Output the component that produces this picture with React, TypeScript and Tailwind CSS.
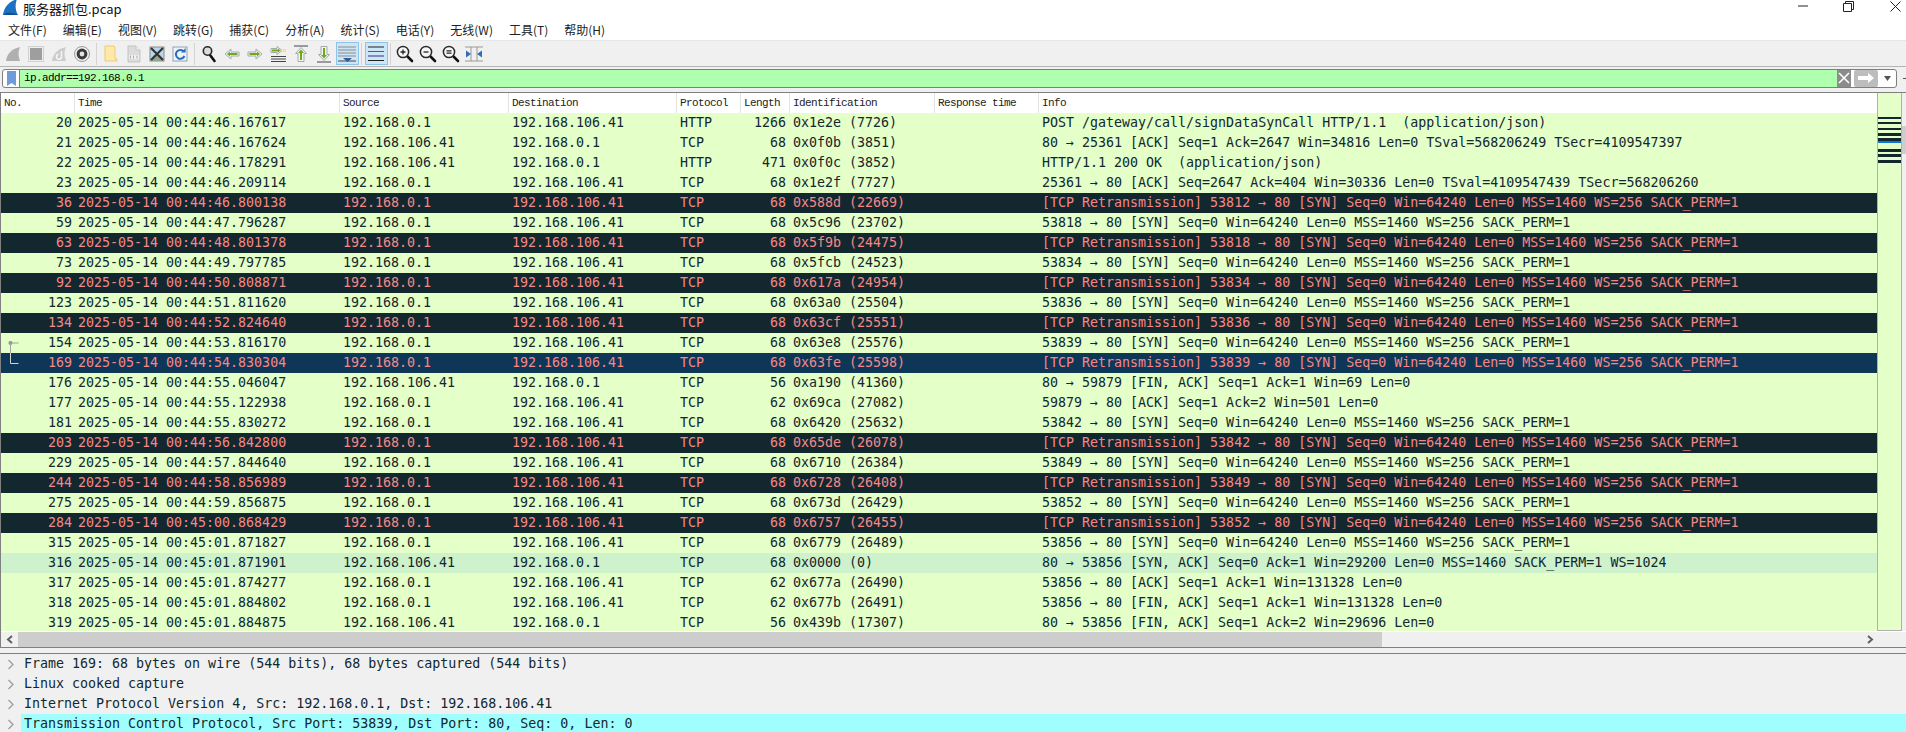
import React from "react";

type Kind = "n" | "d" | "s" | "a";
type Row = [number, string, string, string, string, number, string, string, Kind];

const S = "192.168.0.1";
const D = "192.168.106.41";
const rows: Row[] = [
  [20, "2025-05-14 00:44:46.167617", S, D, "HTTP", 1266, "0x1e2e (7726)", "POST /gateway/call/signDataSynCall HTTP/1.1  (application/json)", "n"],
  [21, "2025-05-14 00:44:46.167624", D, S, "TCP", 68, "0x0f0b (3851)", "80 → 25361 [ACK] Seq=1 Ack=2647 Win=34816 Len=0 TSval=568206249 TSecr=4109547397", "n"],
  [22, "2025-05-14 00:44:46.178291", D, S, "HTTP", 471, "0x0f0c (3852)", "HTTP/1.1 200 OK  (application/json)", "n"],
  [23, "2025-05-14 00:44:46.209114", S, D, "TCP", 68, "0x1e2f (7727)", "25361 → 80 [ACK] Seq=2647 Ack=404 Win=30336 Len=0 TSval=4109547439 TSecr=568206260", "n"],
  [36, "2025-05-14 00:44:46.800138", S, D, "TCP", 68, "0x588d (22669)", "[TCP Retransmission] 53812 → 80 [SYN] Seq=0 Win=64240 Len=0 MSS=1460 WS=256 SACK_PERM=1", "d"],
  [59, "2025-05-14 00:44:47.796287", S, D, "TCP", 68, "0x5c96 (23702)", "53818 → 80 [SYN] Seq=0 Win=64240 Len=0 MSS=1460 WS=256 SACK_PERM=1", "n"],
  [63, "2025-05-14 00:44:48.801378", S, D, "TCP", 68, "0x5f9b (24475)", "[TCP Retransmission] 53818 → 80 [SYN] Seq=0 Win=64240 Len=0 MSS=1460 WS=256 SACK_PERM=1", "d"],
  [73, "2025-05-14 00:44:49.797785", S, D, "TCP", 68, "0x5fcb (24523)", "53834 → 80 [SYN] Seq=0 Win=64240 Len=0 MSS=1460 WS=256 SACK_PERM=1", "n"],
  [92, "2025-05-14 00:44:50.808871", S, D, "TCP", 68, "0x617a (24954)", "[TCP Retransmission] 53834 → 80 [SYN] Seq=0 Win=64240 Len=0 MSS=1460 WS=256 SACK_PERM=1", "d"],
  [123, "2025-05-14 00:44:51.811620", S, D, "TCP", 68, "0x63a0 (25504)", "53836 → 80 [SYN] Seq=0 Win=64240 Len=0 MSS=1460 WS=256 SACK_PERM=1", "n"],
  [134, "2025-05-14 00:44:52.824640", S, D, "TCP", 68, "0x63cf (25551)", "[TCP Retransmission] 53836 → 80 [SYN] Seq=0 Win=64240 Len=0 MSS=1460 WS=256 SACK_PERM=1", "d"],
  [154, "2025-05-14 00:44:53.816170", S, D, "TCP", 68, "0x63e8 (25576)", "53839 → 80 [SYN] Seq=0 Win=64240 Len=0 MSS=1460 WS=256 SACK_PERM=1", "n"],
  [169, "2025-05-14 00:44:54.830304", S, D, "TCP", 68, "0x63fe (25598)", "[TCP Retransmission] 53839 → 80 [SYN] Seq=0 Win=64240 Len=0 MSS=1460 WS=256 SACK_PERM=1", "s"],
  [176, "2025-05-14 00:44:55.046047", D, S, "TCP", 56, "0xa190 (41360)", "80 → 59879 [FIN, ACK] Seq=1 Ack=1 Win=69 Len=0", "n"],
  [177, "2025-05-14 00:44:55.122938", S, D, "TCP", 62, "0x69ca (27082)", "59879 → 80 [ACK] Seq=1 Ack=2 Win=501 Len=0", "n"],
  [181, "2025-05-14 00:44:55.830272", S, D, "TCP", 68, "0x6420 (25632)", "53842 → 80 [SYN] Seq=0 Win=64240 Len=0 MSS=1460 WS=256 SACK_PERM=1", "n"],
  [203, "2025-05-14 00:44:56.842800", S, D, "TCP", 68, "0x65de (26078)", "[TCP Retransmission] 53842 → 80 [SYN] Seq=0 Win=64240 Len=0 MSS=1460 WS=256 SACK_PERM=1", "d"],
  [229, "2025-05-14 00:44:57.844640", S, D, "TCP", 68, "0x6710 (26384)", "53849 → 80 [SYN] Seq=0 Win=64240 Len=0 MSS=1460 WS=256 SACK_PERM=1", "n"],
  [244, "2025-05-14 00:44:58.856989", S, D, "TCP", 68, "0x6728 (26408)", "[TCP Retransmission] 53849 → 80 [SYN] Seq=0 Win=64240 Len=0 MSS=1460 WS=256 SACK_PERM=1", "d"],
  [275, "2025-05-14 00:44:59.856875", S, D, "TCP", 68, "0x673d (26429)", "53852 → 80 [SYN] Seq=0 Win=64240 Len=0 MSS=1460 WS=256 SACK_PERM=1", "n"],
  [284, "2025-05-14 00:45:00.868429", S, D, "TCP", 68, "0x6757 (26455)", "[TCP Retransmission] 53852 → 80 [SYN] Seq=0 Win=64240 Len=0 MSS=1460 WS=256 SACK_PERM=1", "d"],
  [315, "2025-05-14 00:45:01.871827", S, D, "TCP", 68, "0x6779 (26489)", "53856 → 80 [SYN] Seq=0 Win=64240 Len=0 MSS=1460 WS=256 SACK_PERM=1", "n"],
  [316, "2025-05-14 00:45:01.871901", D, S, "TCP", 68, "0x0000 (0)", "80 → 53856 [SYN, ACK] Seq=0 Ack=1 Win=29200 Len=0 MSS=1460 SACK_PERM=1 WS=1024", "a"],
  [317, "2025-05-14 00:45:01.874277", S, D, "TCP", 62, "0x677a (26490)", "53856 → 80 [ACK] Seq=1 Ack=1 Win=131328 Len=0", "n"],
  [318, "2025-05-14 00:45:01.884802", S, D, "TCP", 62, "0x677b (26491)", "53856 → 80 [FIN, ACK] Seq=1 Ack=1 Win=131328 Len=0", "n"],
  [319, "2025-05-14 00:45:01.884875", D, S, "TCP", 56, "0x439b (17307)", "80 → 53856 [FIN, ACK] Seq=1 Ack=2 Win=29696 Len=0", "n"],
];

const menus = ["文件(F)", "编辑(E)", "视图(V)", "跳转(G)", "捕获(C)", "分析(A)", "统计(S)", "电话(Y)", "无线(W)", "工具(T)", "帮助(H)"];

const rowStyles: Record<Kind, string> = {
  n: "bg-[#e4ffc7] text-[#12272e]",
  d: "bg-[#12272e] text-[#f78787]",
  s: "bg-[#0e3757] text-[#f78787]",
  a: "bg-[#cdf2cc] text-[#12272e]",
};

function Ico({ children }: { children: React.ReactNode }) {
  return (
    <div className="w-[23px] h-[23px] flex items-center justify-center shrink-0">
      <svg width="20" height="20" viewBox="0 0 20 20" fill="none">{children}</svg>
    </div>
  );
}
function Sep({ w }: { w: string }) {
  return (
    <div className={`${w} h-[22px] flex justify-center shrink-0`}>
      <div className="w-px h-full bg-[#d4d4d4]" />
    </div>
  );
}
// Pale outlined arrow with a small green core, as in the reference's toolbar.
const Arrow = ({ outer, inner }: { outer: string; inner: string }) => (
  <>
    <path d={outer} fill="#f4f4f4" stroke="#a8a8a8" strokeWidth="1" strokeLinejoin="round" />
    <path d={inner} fill="#6aab1e" />
  </>
);
const Lens = ({ mark }: { mark?: React.ReactNode }) => (
  <>
    <path d="M12.5 12.5l4.5 4.5" stroke="#111" strokeWidth="2.6" strokeLinecap="round" />
    <circle cx="8" cy="8" r="5.6" fill="#f6f6f6" stroke="#2a2a2a" strokeWidth="1.5" />
    {mark}
  </>
);

function Toolbar() {
  return (
    <div className="h-[26px] bg-[#f0f0f0] border-b border-[#b4b4b4] flex items-center pl-[1.5px]">
      <Ico><path d="M3 17C4 10 8 5 17 3c-2 4-2 9 0 14z" fill="#b0b0b0" /></Ico>
      <Ico>
        <rect x="2.5" y="2.5" width="15" height="15" fill="#f0f0f0" stroke="#d0d0d0" />
        <rect x="4" y="4" width="12" height="12" fill="#9e9e9e" />
      </Ico>
      <Ico>
        <path d="M3 17C4 10 8 5 17 3c-2 4-2 9 0 14z" fill="#cccccc" />
        <path d="M12.5 7v5.5a2.5 2.5 0 1 1-3-2.2" stroke="#f4f4f4" strokeWidth="1.6" />
      </Ico>
      <Ico>
        <circle cx="10" cy="10" r="7.5" fill="#eeeeee" stroke="#9a9a9a" />
        <circle cx="10" cy="10" r="5.4" fill="#3a3a3a" />
        <circle cx="10" cy="10" r="2.4" fill="#e4e4e4" />
      </Ico>
      <Sep w="w-[6px]" />
      <Ico>
        <path d="M4 2h9l1 1v12h2v2H4z" fill="#ffe9a8" stroke="#eccb72" />
      </Ico>
      <Ico>
        <path d="M4 2h8l4 4v12H4z" fill="#dcdcdc" stroke="#c4c4c4" />
        <path d="M12 2v4h4" fill="#f4f4f4" stroke="#c4c4c4" />
        <rect x="5" y="11" width="10" height="4" fill="#f2f2f2" />
        <path d="M6.5 11.5v3M9.5 11.5v3M13 11.5v3" stroke="#a8a8a8" />
      </Ico>
      <Ico>
        <rect x="3" y="3" width="14" height="14" fill="#bcd6ee" stroke="#8a8a8a" />
        <path d="M3 17l4-6h6l4 6z" fill="#8fa88f" />
        <path d="M4 4l12 12M16 4L4 16" stroke="#333" strokeWidth="2.2" />
      </Ico>
      <Ico>
        <rect x="3" y="3" width="14" height="14" fill="#eef4fa" stroke="#8ea3b8" />
        <path d="M13.8 7.6A4.4 4.4 0 1 0 14.4 12" stroke="#2a6dbd" strokeWidth="2" />
        <path d="M11 8.4h4.6V4z" fill="#2a6dbd" />
      </Ico>
      <Sep w="w-[6px]" />
      <Ico>
        <path d="M11 11l4.5 6" stroke="#111" strokeWidth="2.6" strokeLinecap="round" />
        <circle cx="8.5" cy="7" r="4.2" fill="#dcdcdc" stroke="#2a2a2a" strokeWidth="1.6" />
      </Ico>
      <Ico><Arrow outer="M3 10l6-5v3h8v4H9v3z" inner="M5 10l3-2.6V9h7.5v2H8v1.6z" /></Ico>
      <Ico><Arrow outer="M17 10l-6-5v3H3v4h8v3z" inner="M15 10l-3-2.6V9H4.5v2H12v1.6z" /></Ico>
      <Ico>
        <path d="M3 12.5h15M3 15h15M3 17.5h15" stroke="#444" />
        <Arrow outer="M14 6.5L9 2.5v2H3v4h6v2z" inner="M12.4 6.5L10 4.6V5.6H4v2h6v1z" />
        <rect x="15" y="5" width="3" height="3" fill="#ffe17a" />
      </Ico>
      <Ico>
        <path d="M3 2h14" stroke="#444" />
        <Arrow outer="M10 3.5l5.5 6H13v8H7v-8H4.5z" inner="M10 5.5l3 3.5h-2v7H9V9H7z" />
      </Ico>
      <Ico>
        <path d="M3 18h14" stroke="#444" />
        <Arrow outer="M10 16.5l5.5-6H13v-8H7v8H4.5z" inner="M10 14.5l3-3.5h-2V4H9v7H7z" />
      </Ico>
      <div className="w-[23px] h-[23px] flex items-center justify-center shrink-0 bg-[#cde6f7] border border-[#8fc4ea]">
        <svg width="20" height="20" viewBox="0 0 20 20" fill="none">
          <path d="M1 3h18M1 6h18M1 9h18M1 12h18" stroke="#8a8a8a" />
          <path d="M1 17h18" stroke="#444" />
          <path d="M6 14h9l-4.5 4z" fill="#2a5d9c" />
        </svg>
      </div>
      <Sep w="w-[6px]" />
      <div className="w-[23px] h-[23px] flex items-center justify-center shrink-0 bg-[#cde6f7] border border-[#8fc4ea]">
        <svg width="20" height="20" viewBox="0 0 20 20" fill="none">
          <path d="M2 3h16" stroke="#222" />
          <path d="M2 7.5h16" stroke="#e02020" />
          <path d="M2 12h16" stroke="#3a2a8c" />
          <path d="M2 16.5h16" stroke="#222" />
        </svg>
      </div>
      <Sep w="w-[6px]" />
      <Ico><Lens mark={<path d="M5.5 8h5M8 5.5v5" stroke="#222" strokeWidth="1.3" />} /></Ico>
      <Ico><Lens mark={<path d="M5.5 8h5" stroke="#222" strokeWidth="1.3" />} /></Ico>
      <Ico><Lens mark={<path d="M5.5 6.8h5M5.5 9.2h5" stroke="#222" strokeWidth="1.2" />} /></Ico>
      <Ico>
        <path d="M1 3h18M1 17h18M7 3v14M13 3v14" stroke="#9a9a9a" />
        <path d="M2 6.5l5 3.5-5 3.500zM18 6.500l-5 3.500 5 3.500z" fill="#2e6fb5" />
      </Ico>
    </div>
  );
}

function FilterBar() {
  return (
    <div className="h-[25px] bg-[#f0f0f0] flex items-center pl-[2px]">
      <div className="flex-1 h-[19px] mt-[-3px] flex items-stretch rounded-[3px] border border-[#7f7f7f] bg-white overflow-hidden">
        <div className="w-[17px] flex justify-center items-center border-r border-[#7f7f7f] shrink-0">
          <svg width="9" height="15" viewBox="0 0 9 15">
            <path d="M0 0h9v15L4.500 12 0 15z" fill="#6f9bd8" />
          </svg>
        </div>
        <div className="flex-1 bg-[#afffaf] pl-[4px] text-[11px] tracking-[-0.6px] leading-[17px] text-black font-['Liberation_Mono',monospace]">ip.addr==192.168.0.1</div>
        <div className="w-[14px] bg-[#8c8c8c] flex items-center justify-center shrink-0">
          <svg width="12" height="12" viewBox="0 0 12 12"><path d="M1 1l10 10M11 1L1 11" stroke="#fff" strokeWidth="1.6" /></svg>
        </div>
        <div className="w-[3px] bg-white shrink-0" />
        <div className="w-[24px] bg-[#bdbdbd] rounded-[2px] flex items-center justify-center shrink-0">
          <svg width="16" height="10" viewBox="0 0 16 10"><path d="M0 3h10V0l6 5-6 5V7H0z" fill="#fff" /></svg>
        </div>
        <div className="w-[18px] flex items-center justify-center shrink-0">
          <svg width="7" height="5" viewBox="0 0 7 5"><path d="M0 0h7L3.500 5z" fill="#555" /></svg>
        </div>
      </div>
      <div className="w-[9px] flex justify-end shrink-0 mt-[-3px]">
        <div className="w-[3px] h-px bg-[#555]" />
      </div>
    </div>
  );
}

const hdr = "h-full pl-[3px] border-r border-[#e3e3e3] flex items-center shrink-0";

function PacketHeader() {
  return (
    <div className="h-[20px] shrink-0 flex bg-white text-[11px] tracking-[-0.6px] text-[#222] font-['Liberation_Mono',monospace] items-stretch">
      <div className={`${hdr} w-[74px]`}>No.</div>
      <div className={`${hdr} w-[265px]`}>Time</div>
      <div className={`${hdr} w-[169px]`}>Source</div>
      <div className={`${hdr} w-[168px]`}>Destination</div>
      <div className={`${hdr} w-[64px]`}>Protocol</div>
      <div className={`${hdr} w-[49px]`}>Length</div>
      <div className={`${hdr} w-[145px]`}>Identification</div>
      <div className={`${hdr} w-[104px]`}>Response time</div>
      <div className="pl-[3px] flex items-center flex-1">Info</div>
    </div>
  );
}

function PacketRow({ r }: { r: Row }) {
  const [no, time, src, dst, proto, len, id, info, kind] = r;
  return (
    <div className={`h-[20px] shrink-0 flex items-center relative whitespace-pre ${rowStyles[kind]}`}>
      {no === 154 && (
        <svg className="absolute left-0 top-0" width="20" height="20" viewBox="0 0 20 20" fill="none">
          <circle cx="9.500" cy="10" r="2" fill="#8f8f8f" />
          <path d="M9.500 10h8M9.500 10v10" stroke="#a0a0a0" />
        </svg>
      )}
      {no === 169 && (
        <svg className="absolute left-0 top-0" width="20" height="20" viewBox="0 0 20 20" fill="none">
          <path d="M9.500 0v10.500h8" stroke="#d4d4d4" />
        </svg>
      )}
      <div className="w-[71px] text-right shrink-0">{no}</div>
      <div className="w-[3px] shrink-0" />
      <div className="w-[265px] pl-[3px] shrink-0">{time}</div>
      <div className="w-[169px] pl-[3px] shrink-0">{src}</div>
      <div className="w-[168px] pl-[3px] shrink-0">{dst}</div>
      <div className="w-[64px] pl-[3px] shrink-0">{proto}</div>
      <div className="w-[45px] text-right shrink-0">{len}</div>
      <div className="w-[4px] shrink-0" />
      <div className="w-[145px] pl-[3px] shrink-0">{id}</div>
      <div className="w-[104px] shrink-0" />
      <div className="pl-[3px] flex-1">{info}</div>
    </div>
  );
}

function Minimap() {
  return (
    <div className="w-[25px] h-full shrink-0 bg-[#e4ffc7] border-x border-b border-[#b0b0b0] flex flex-col pt-[24px]">
      <div className="h-[2px] bg-[#12272e]" />
      <div className="h-[3px]" />
      <div className="h-[2px] bg-[#12272e]" />
      <div className="h-[4px]" />
      <div className="h-[2px] bg-[#12272e]" />
      <div className="h-[3px]" />
      <div className="h-[3px] bg-[#12272e]" />
      <div className="h-[2px]" />
      <div className="h-[3px] bg-[#12272e]" />
      <div className="h-[2px] bg-[#0a78d7]" />
      <div className="h-[6px]" />
      <div className="h-[3px] bg-[#12272e]" />
      <div className="h-[2px]" />
      <div className="h-[3px] bg-[#12272e]" />
      <div className="h-[3px]" />
      <div className="h-[3px] bg-[#12272e]" />
    </div>
  );
}

function PacketList() {
  return (
    <div className="h-[556px] shrink-0 border-t border-b border-l border-[#808080] flex flex-col bg-[#f0f0f0] overflow-hidden">
      <div className="flex-1 min-h-0 flex">
        <div className="flex-1 min-w-0 flex flex-col overflow-hidden bg-[#e4ffc7]">
          <PacketHeader />
          {rows.map((r) => (
            <PacketRow key={r[0]} r={r} />
          ))}
        </div>
        <Minimap />
        <div className="w-[4px] bg-[#f0f0f0] flex flex-col pt-[33px] shrink-0">
          <div className="h-[28px] bg-[#cdcdcd]" />
        </div>
      </div>
      <div className="h-[16px] shrink-0 flex items-center border-t border-white">
        <div className="w-[17px] flex justify-center shrink-0">
          <svg width="8" height="9" viewBox="0 0 8 9" fill="none"><path d="M6 1L2 4.500 6 8" stroke="#606060" strokeWidth="2" /></svg>
        </div>
        <div className="w-[1364px] h-full bg-[#cdcdcd] shrink-0" />
        <div className="flex-1" />
        <div className="w-[11px] shrink-0">
          <svg width="8" height="9" viewBox="0 0 8 9" fill="none"><path d="M2 1l4 3.500L2 8" stroke="#606060" strokeWidth="2" /></svg>
        </div>
        <div className="w-[29px] shrink-0" />
      </div>
    </div>
  );
}

const details = [
  "Frame 169: 68 bytes on wire (544 bits), 68 bytes captured (544 bits)",
  "Linux cooked capture",
  "Internet Protocol Version 4, Src: 192.168.0.1, Dst: 192.168.106.41",
  "Transmission Control Protocol, Src Port: 53839, Dst Port: 80, Seq: 0, Len: 0",
];

function Details() {
  return (
    <div className="flex-1 min-h-0 mt-[5px] border-t border-[#808080] bg-[#f0f0f0] text-[#12272e] overflow-hidden">
      {details.map((t, i) => (
        <div key={t} className="h-[20px] flex items-center whitespace-pre">
          <div className="w-[21px] flex justify-center shrink-0">
            <svg width="8" height="11" viewBox="0 0 8 11" fill="none"><path d="M1.500 1L6 5.500 1.500 10" stroke="#9a9a9a" strokeWidth="1.2" /></svg>
          </div>
          <div className={`flex-1 h-full flex items-center pl-[3px] ${i === 3 ? "bg-[#9fffff]" : ""}`}>{t}</div>
        </div>
      ))}
    </div>
  );
}

export default function App() {
  return (
    <div className="w-[1906px] h-[732px] overflow-hidden flex flex-col bg-[#f0f0f0] text-[13.3px] font-['DejaVu_Sans_Mono',monospace]">
      <div className="h-[20px] shrink-0 flex items-center bg-white relative font-['Noto_Sans_CJK_SC',sans-serif] text-[13px] text-[#111]">
        <svg className="ml-[2px] mt-[-4px]" width="18" height="18" viewBox="0 0 18 18">
          <path d="M1 16C2 9 6 3 15 0c-2 5-2 11 1 16z" fill="#1d6fc4" />
          <path d="M1 16c4-3 9-3 15 0z" fill="#0f4f94" />
        </svg>
        <span className="ml-[3px] mt-[-2px]">服务器抓包.pcap</span>
        <div className="ml-auto flex items-center mt-[-8px]">
          <svg width="12" height="2" viewBox="0 0 12 2" className="mr-[33px]"><path d="M0 1h10" stroke="#222" /></svg>
          <svg width="11" height="11" viewBox="0 0 11 11" fill="none" className="mr-[36px]">
            <path d="M.5 2.500h8v8h-8zM2.500 2.500v-2h8v8h-2" stroke="#222" />
          </svg>
          <svg width="11" height="11" viewBox="0 0 11 11" fill="none" className="mr-[5px]">
            <path d="M.5.5l10 10M10.500.5l-10 10" stroke="#222" />
          </svg>
        </div>
      </div>
      <div className="h-[21px] shrink-0 flex items-center bg-white border-b border-[#e6e6e6] font-['Noto_Sans_CJK_SC',sans-serif] text-[12px] text-[#222]">
        {menus.map((m) => (
          <span key={m} className="px-[8px]">{m}</span>
        ))}
      </div>
      <Toolbar />
      <FilterBar />
      <PacketList />
      <Details />
    </div>
  );
}
